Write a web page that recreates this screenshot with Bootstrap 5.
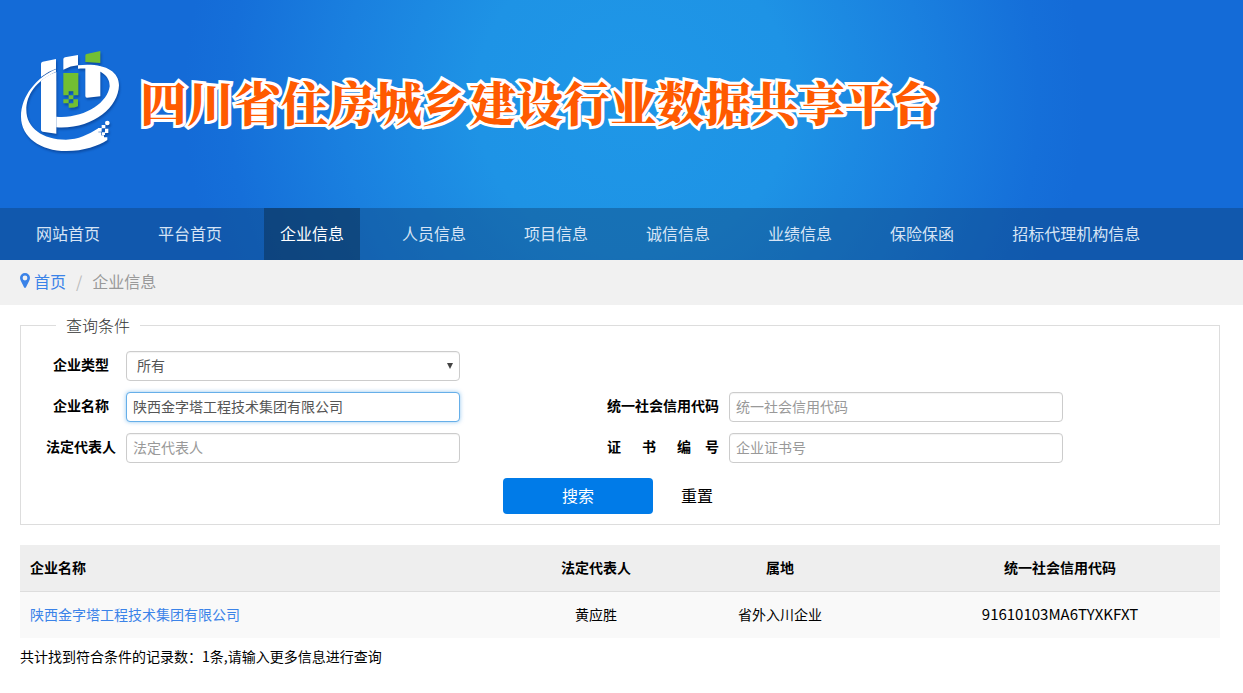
<!DOCTYPE html>
<html lang="zh-CN">
<head>
<meta charset="utf-8">
<meta name="viewport" content="width=device-width, initial-scale=1">
<title>四川省住房城乡建设行业数据共享平台</title>
<link href="https://cdn.jsdelivr.net/npm/bootstrap@5.3.0/dist/css/bootstrap.min.css" rel="stylesheet">
<style>
body{font-family:"Noto Sans CJK SC",sans-serif;font-size:14px;line-height:20px;color:#000}
a{color:#3b83e8;text-decoration:none}
.site-head{background:#146bd7 radial-gradient(circle 450px at 51% 38%,#1f97e7 0,#1e93e5 35%,#1a80df 65%,#156fd9 90%,#146bd7 100%)}
.brand{height:208px;padding:0 20px 6px;gap:20px}
.brand svg{width:100px;height:102px;filter:drop-shadow(1px 2px 1px rgba(0,30,90,.4))}
.brand h1{font-family:"Noto Serif CJK SC","Noto Sans CJK SC",serif;font-size:47px;line-height:60px;font-weight:900;color:#ff5a00;-webkit-text-stroke:6px #fff;paint-order:stroke fill;stroke-linejoin:round;margin:0}
.main-nav{background:rgba(13,61,110,.4);padding:0 20px;column-gap:26px}
.main-nav .nav-link{padding:0 16px 2px;font-size:16px;line-height:50px;color:#d6e4f5}
.main-nav .nav-link.active{background:rgba(10,45,80,.5);color:#fff}
.crumbs{background:#f1f1f1;padding:0 20px 4px;height:45px;font-size:16px}
.crumbs svg{width:10px;height:15px;margin-right:4px}
.crumbs .breadcrumb-item{line-height:22px}
.crumbs .breadcrumb-item+.breadcrumb-item{padding-left:10px;color:#999}
.crumbs .breadcrumb-item+.breadcrumb-item::before{padding-right:10px;color:#bbb}
.content{padding:8px 23px 16px 20px}
.query{border:1px solid #ddd;padding:14px 0 10px}
.query legend{float:none;width:auto;margin:0 0 0 35px;padding:0 10px;font-size:16px;line-height:24px;font-weight:300;color:#333}
.fields{display:grid;grid-template-columns:105px 334px 269px 334px;row-gap:11px}
.fields label{font-weight:700;line-height:26px;color:#000}
.fields .left-label{grid-column:1;text-align:center;padding-left:15px}
.fields .right-label{grid-column:3;text-align:right;padding-right:10px}
.fields .form-control,.fields .form-select{height:30px;padding:0 6px 2px;font-size:14px;line-height:26px;color:#555;border:1px solid #ccc;border-radius:4px;box-shadow:inset 0 1px 1px rgba(0,0,0,.05)}
.fields .form-select{padding-left:10px;background-image:url("data:image/svg+xml,%3Csvg xmlns='http://www.w3.org/2000/svg' viewBox='0 0 6 6'%3E%3Cpath d='M0 0h6L3 6z' fill='%23444'/%3E%3C/svg%3E");background-size:6px 6px;background-position:right 6px center}
.fields .form-control::placeholder{color:#999}
.fields .current{border-color:#66afe9;box-shadow:0 0 4px rgba(102,175,233,.7)}
.actions{padding:15px 8px 0 0;gap:12px}
.actions .btn{font-size:16px;line-height:24px;height:36px;padding:0 16px 2px;border:0;border-radius:4px;color:#000}
.actions .btn-primary{width:150px;background:#007be8;color:#fff}
.results{margin:20px 0 8px;font-size:14px;line-height:20px;table-layout:fixed;--bs-table-bg:#f9f9f9;--bs-table-color:#000}
.results th,.results td{padding:12px 10px 14px;border:0;text-align:center}
.results thead th{background:#eee;border-bottom:1px solid #ddd}
.results tr>:first-child{text-align:left}
.results .person{width:128px}
.results .area{width:240px}
.results .code{width:320px}
.results td.code{font-size:15px}
</style>
</head>
<body>
<header class="site-head">
  <div class="brand d-flex align-items-center">
    <svg viewBox="30 30 300 306" aria-hidden="true">
      <g fill="#fff">
        <path d="M93 71Q93 66 98 65L138 57V86Q114 94 93 111Z"/>
        <path d="M160 58Q160 53 165 52L204 45V76Q182 77 160 89Z"/>
        <path d="M93 122Q114 104 139 96V281L98 275Q93 274 93 269Z"/>
        <path d="M226 79H271V169L231 173Q226 173 226 168Z"/>
        <path d="M204 76C280 68 327 92 327 136C325 205 245 269 139 262V230C220 237 293 190 299 139C300 104 266 81 204 86Z"/>
        <path d="M138 88C80 112 33 168 33 230C33 291 91 333 169 333C222 333 265 318 292 300V292H282V286H273V277H265V265C235 284 205 299 168 299C98 299 49 264 49 210C49 165 77 123 138 95Z"/>
        <path d="M264 264h11v11h-11zM275 255h11v10h-11zM285 266h10v13h-10zM275 277h10v8h-10z"/>
        <circle cx="292" cy="249" r="7"/>
      </g>
      <path fill="#72bf32" d="M226 47Q226 43 230 42L271 33V69L226 66ZM160 99H205V154H160ZM160 153H176V166H160ZM190 153H205V166H190ZM176 166H190V178H176ZM160 178H176V190H160ZM190 178H204V190H190ZM176 190H204V199Q190 205 176 203Z"/>
    </svg>
    <h1>四川省住房城乡建设行业数据共享平台</h1>
  </div>
  <nav class="main-nav nav" aria-label="主导航">
    <a class="nav-link" href="#">网站首页</a>
    <a class="nav-link" href="#">平台首页</a>
    <a class="nav-link active" aria-current="page" href="#">企业信息</a>
    <a class="nav-link" href="#">人员信息</a>
    <a class="nav-link" href="#">项目信息</a>
    <a class="nav-link" href="#">诚信信息</a>
    <a class="nav-link" href="#">业绩信息</a>
    <a class="nav-link" href="#">保险保函</a>
    <a class="nav-link" href="#">招标代理机构信息</a>
  </nav>
</header>
<nav class="crumbs d-flex align-items-center" aria-label="当前位置">
  <svg viewBox="0 0 10 15" aria-hidden="true"><path fill="#3b83e8" fill-rule="evenodd" d="M5 0a5 5 0 0 1 5 5c0 2-2 5-4 9.300q-1 1.400-2 0C2 10 0 7 0 5a5 5 0 0 1 5-5zm0 2.600a2.400 2.400 0 1 0 0 4.800 2.400 2.400 0 0 0 0-4.800z"/></svg>
  <ol class="breadcrumb mb-0">
    <li class="breadcrumb-item"><a href="#">首页</a></li>
    <li class="breadcrumb-item" aria-current="page">企业信息</li>
  </ol>
</nav>
<main class="content">
  <form>
    <fieldset class="query">
      <legend>查询条件</legend>
      <div class="fields">
        <label class="left-label" for="type">企业类型</label>
        <select class="form-select" id="type"><option>所有</option></select>
        <label class="left-label" for="name">企业名称</label>
        <input class="form-control current" id="name" type="text" value="陕西金字塔工程技术集团有限公司">
        <label class="right-label" for="credit">统一社会信用代码</label>
        <input class="form-control" id="credit" type="text" placeholder="统一社会信用代码">
        <label class="left-label" for="legal">法定代表人</label>
        <input class="form-control" id="legal" type="text" placeholder="法定代表人">
        <label class="right-label" for="cert">证&emsp;&ensp;书&emsp;&ensp;编&emsp;号</label>
        <input class="form-control" id="cert" type="text" placeholder="企业证书号">
      </div>
      <div class="actions d-flex justify-content-center">
        <button class="btn btn-primary" type="submit">搜索</button>
        <button class="btn" type="reset">重置</button>
      </div>
    </fieldset>
  </form>
  <table class="results table">
    <thead>
      <tr><th scope="col">企业名称</th><th scope="col" class="person">法定代表人</th><th scope="col" class="area">属地</th><th scope="col" class="code">统一社会信用代码</th></tr>
    </thead>
    <tbody>
      <tr><td><a href="#">陕西金字塔工程技术集团有限公司</a></td><td>黄应胜</td><td>省外入川企业</td><td class="code">91610103MA6TYXKFXT</td></tr>
    </tbody>
  </table>
  <p class="mb-0">共计找到符合条件的记录数：1条,请输入更多信息进行查询</p>
</main>
<script src="https://cdn.jsdelivr.net/npm/bootstrap@5.3.0/dist/js/bootstrap.bundle.min.js"></script>
</body>
</html>
